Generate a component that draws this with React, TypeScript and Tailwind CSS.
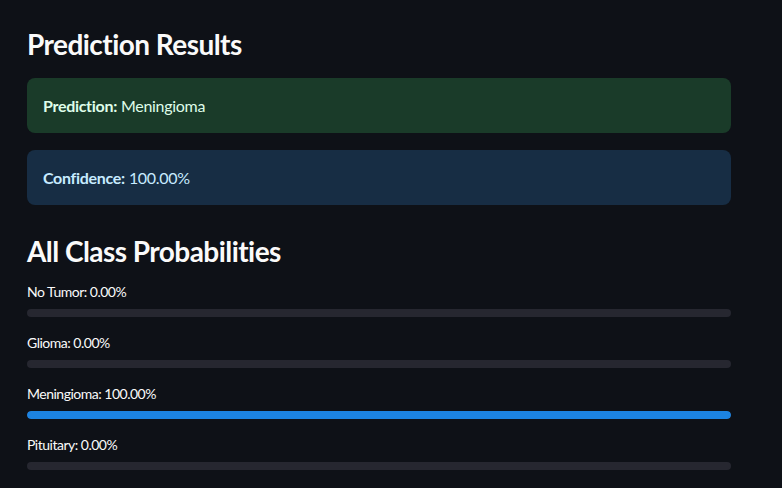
import React from 'react'

const probs = [
  { name: 'No Tumor', value: 0 },
  { name: 'Glioma', value: 0 },
  { name: 'Meningioma', value: 100 },
  { name: 'Pituitary', value: 0 },
]

const App = () => {
  return (
    <div className="min-h-[488px] w-full bg-[#0e1117] text-[#fafafa] px-[27px] pt-[26px]" style={{ fontFamily: 'Lato, "Noto Sans", sans-serif' }}>
      <div className="w-[704px] flex flex-col">
        <h3 className="text-[28px] font-bold leading-[36px] tracking-[-0.55px]">Prediction Results</h3>

        <div className="mt-[16px] h-[55px] rounded-lg bg-[#1a3b29] text-[#dffde9] px-4 flex items-center text-[16px] tracking-[-0.3px]">
          <span className="font-bold mr-1">Prediction:</span> Meningioma
        </div>

        <div className="mt-[17px] h-[55px] rounded-lg bg-[#172d44] text-[#c7ebff] px-4 flex items-center text-[16px] tracking-[-0.3px]">
          <span className="font-bold mr-1">Confidence:</span> 100.00%
        </div>

        <h3 className="mt-[28px] text-[28px] font-bold leading-[36px] tracking-[-0.55px]">All Class Probabilities</h3>

        <div className="mt-[13px] flex flex-col gap-[16px]">
          {probs.map((p) => (
            <div key={p.name} className="flex flex-col">
              <div className="text-[14px] leading-[20px] tracking-[-0.5px]">{p.name}: {p.value.toFixed(2)}%</div>
              <div className="mt-[7px] h-[8px] w-full rounded-full bg-[#262730] overflow-hidden">
                <div className="h-full rounded-full bg-[#1c83e1]" style={{ width: `${p.value}%` }} />
              </div>
            </div>
          ))}
        </div>
      </div>
    </div>
  )
}

export default App
